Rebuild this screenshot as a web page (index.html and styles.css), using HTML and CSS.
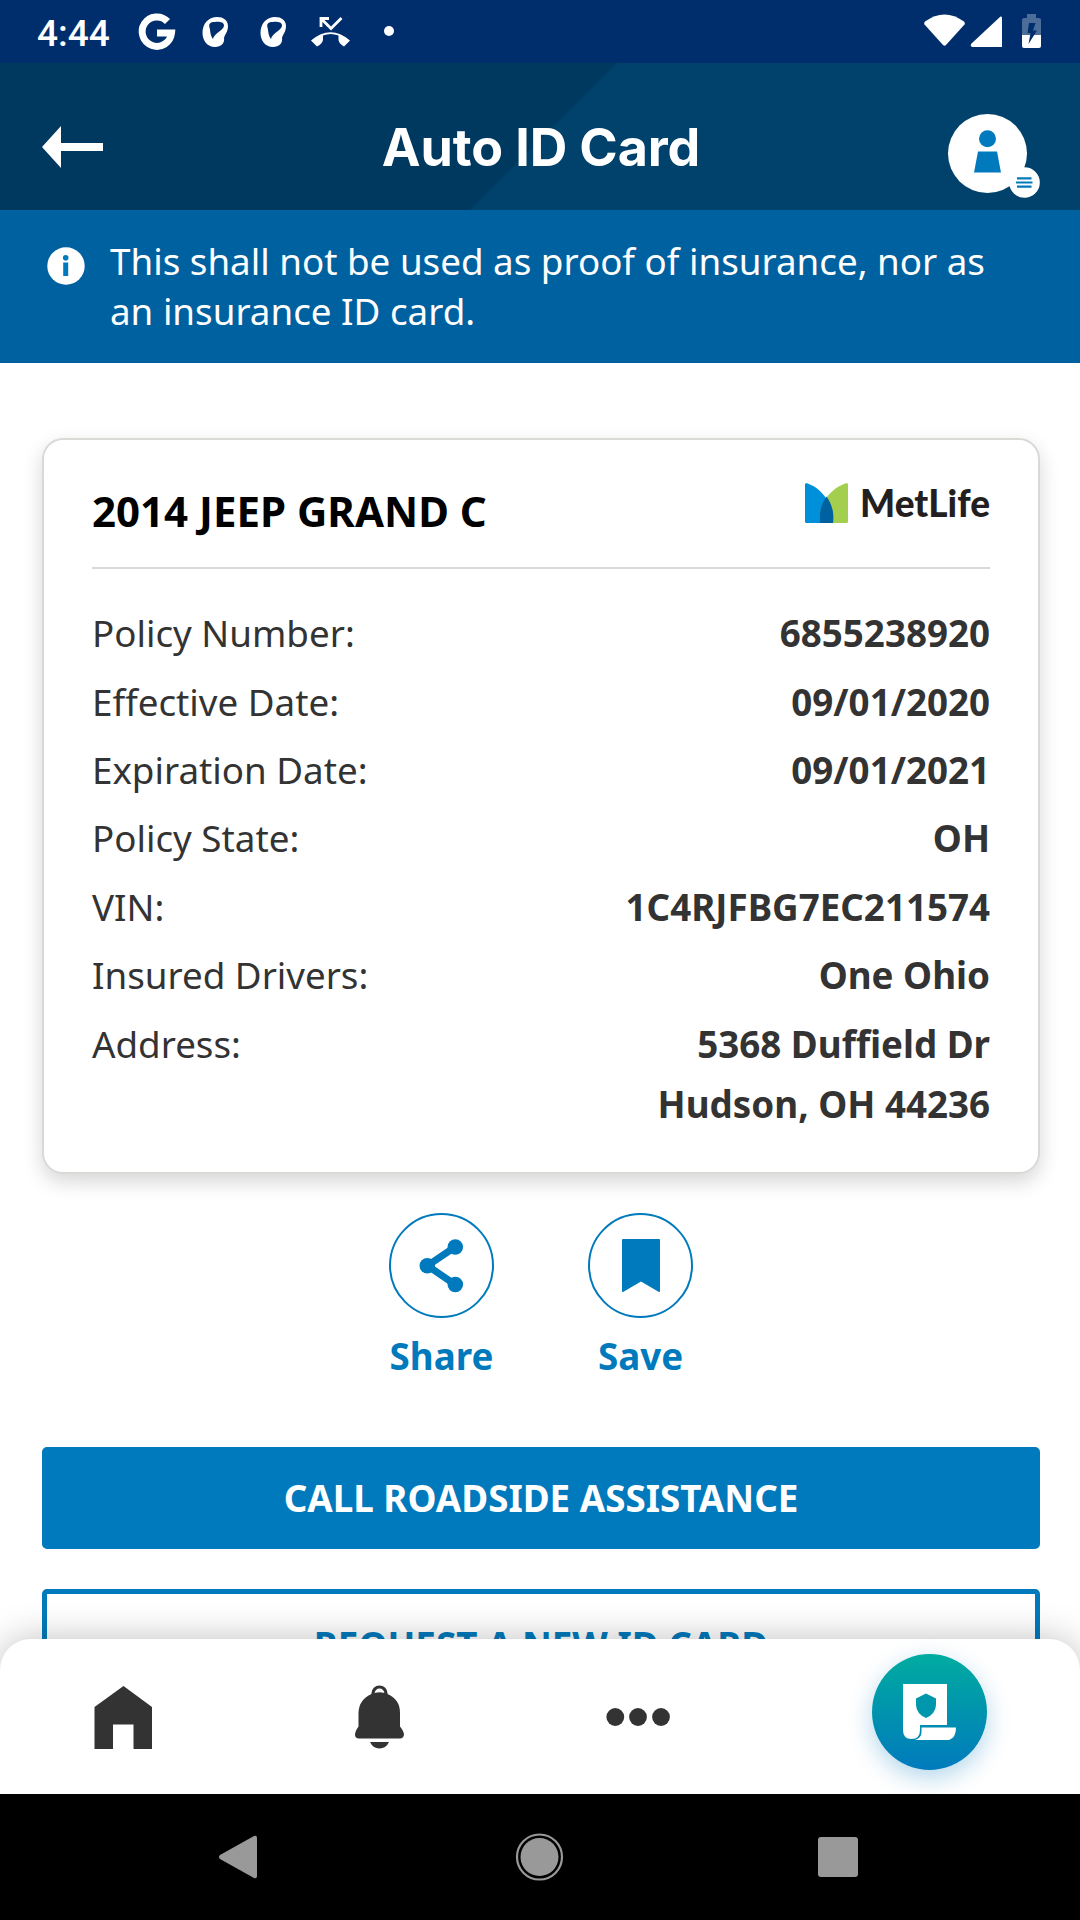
FILE: index.html
```html
<!DOCTYPE html>
<html lang="en">
<head>
<meta charset="utf-8">
<title>Auto ID Card</title>
<link rel="stylesheet" href="styles.css">
</head>
<body>
<div class="screen">
  <div class="status">
    <span class="clock">4:44</span>
    <svg class="notifications" viewBox="130 0 270 63" width="270" height="63">
      <path d="M167.500 21.500A14.700 14.700 0 1 0 171.500 33H157" fill="none" stroke="#fff" stroke-width="7"/>
      <path id="knot" fill="#fff" fill-rule="evenodd" d="M216 17C223 16.500 228 20 228 26C228 32 225 34 224 38C225 43 221 47 215 47C207 47 202.500 40 202.500 33C202.500 24 208 17.500 216 17ZM215 22C210 22 208.500 24 209.500 27.500C210.500 31 210 35 213 39C214 33 223.500 31 224 25.500C224 22 219 21.500 215 22Z"/>
      <use href="#knot" x="58"/>
      <path fill="none" stroke="#fff" stroke-width="2.800" d="M321 27V18.500H329M321.500 19L331 28.500L341.500 18"/>
      <path fill="#fff" d="M311 40.500Q330.500 24 350 40.500L344 46.500Q339 43.500 338.500 40V35.500Q330.500 32.500 323 35.500V40Q322 44 317 46.500Z"/>
      <circle cx="389" cy="31" r="5" fill="#fff"/>
    </svg>
    <svg class="system" viewBox="920 0 130 63" width="130" height="63">
      <path fill="#fff" d="M925 21.500Q944.500 7.500 964 21.500Q965.500 23 964.500 24.500L946 45Q944.500 46.500 943 45L924.500 24.500Q923.500 23 925 21.500Z"/>
      <path fill="#fff" d="M1000.500 16.500Q1002 16 1002 18V47H972Q970 46 971 44Z"/>
      <path fill="#4c6c9a" d="M1022 20Q1022 18 1024 18H1027V14H1036V18H1039Q1041 18 1041 20V35H1022Z"/>
      <path fill="#fff" d="M1022 35H1041V46Q1041 48 1039 48H1024Q1022 48 1022 46Z"/>
      <path fill="#002e6c" d="M1029 23H1035.500L1033 30.500H1037L1028.500 44L1030.500 33H1027.500Z"/>
    </svg>
  </div>

  <header class="header">
    <svg class="back" viewBox="0 0 62 42" width="62" height="42"><path fill="#fff" d="M0 21L19 0V17H61V25H19V42Z"/></svg>
    <h1 class="title">Auto ID Card</h1>
    <svg class="profile" viewBox="0 0 94 86" width="94" height="86">
      <circle cx="39.500" cy="39.500" r="39.500" fill="#fff"/>
      <circle cx="39.500" cy="24.700" r="8.500" fill="#007abc"/>
      <path fill="#007abc" d="M30 37.500H49L53 58.500H26Z"/>
      <circle cx="76.500" cy="68.500" r="15.300" fill="#fff"/>
      <path stroke="#007abc" stroke-width="2.200" d="M69 64.300H83.500M68 68.500H84.500M69 72.700H83.500"/>
    </svg>
  </header>

  <section class="notice">
    <svg class="info" viewBox="0 0 38 38" width="38" height="38">
      <circle cx="19" cy="19" r="18.700" fill="#fff"/>
      <circle cx="18.700" cy="10.700" r="2.800" fill="#007abc"/>
      <path fill="#007abc" d="M16.200 15.500H21.200V29H16.200Z"/>
    </svg>
    <p class="notice-text">This shall not be used as proof of insurance, nor as an insurance ID card.</p>
  </section>

  <main class="content">
    <article class="card">
      <div class="card-head">
        <h2 class="vehicle">2014 JEEP GRAND C</h2>
        <div class="brand">
          <svg viewBox="0 0 43 40" width="43" height="40">
            <path fill="#0090da" d="M0 1.500Q0 0 1.500 0C16 5 27.500 18 28 40H1.500Q0 40 0 38.500Z"/>
            <path fill="#a4ce4e" d="M43 1.500Q43 0 41.500 0C27 5 13.500 18 14.500 40H41.500Q43 40 43 38.500Z"/>
            <path fill="#0061a0" d="M21.500 13.500C26.500 20 29.500 30 28 40H14.500C14 30 16 21 21.500 13.500Z"/>
          </svg>
          <span class="brand-name">MetLife</span>
        </div>
      </div>
      <dl class="details">
        <div class="row"><dt>Policy Number:</dt><dd>6855238920</dd></div>
        <div class="row"><dt>Effective Date:</dt><dd>09/01/2020</dd></div>
        <div class="row"><dt>Expiration Date:</dt><dd>09/01/2021</dd></div>
        <div class="row"><dt>Policy State:</dt><dd>OH</dd></div>
        <div class="row"><dt>VIN:</dt><dd>1C4RJFBG7EC211574</dd></div>
        <div class="row"><dt>Insured Drivers:</dt><dd>One Ohio</dd></div>
        <div class="row"><dt>Address:</dt><dd>5368 Duffield Dr<br>Hudson, OH 44236</dd></div>
      </dl>
    </article>

    <div class="actions">
      <div class="action">
        <svg viewBox="0 0 105 105" width="105" height="105">
          <circle cx="52.500" cy="52.500" r="51.500" fill="none" stroke="#007abc" stroke-width="2"/>
          <path d="M66 34L38.500 52.700M38.500 52.700L66 71.500" stroke="#007abc" stroke-width="7"/>
          <g fill="#007abc"><circle cx="66.300" cy="34" r="7.800"/><circle cx="38.300" cy="52.700" r="7.800"/><circle cx="66.300" cy="71.500" r="7.800"/></g>
        </svg>
        <span>Share</span>
      </div>
      <div class="action">
        <svg viewBox="0 0 105 105" width="105" height="105">
          <circle cx="52.500" cy="52.500" r="51.500" fill="none" stroke="#007abc" stroke-width="2"/>
          <path fill="#007abc" d="M34 27Q34 26 35 26H71Q72 26 72 27V78Q72 79.500 70.500 78.700L53 68.500L35.500 78.700Q34 79.500 34 78Z"/>
        </svg>
        <span>Save</span>
      </div>
    </div>

    <div class="buttons">
      <button class="btn primary">CALL ROADSIDE ASSISTANCE</button>
      <button class="btn outline">REQUEST A NEW ID CARD</button>
    </div>
  </main>

  <nav class="tabs">
    <svg viewBox="94 1685 58 64" width="58" height="64"><path fill="#333" d="M123.500 1686L152 1707V1749H133.500V1724.500H113V1749H94.500V1707Z"/></svg>
    <svg viewBox="354 1684.500 50 65" width="50" height="65">
      <path fill="none" stroke="#333" stroke-width="3.200" d="M373 1695V1694A6.500 6.500 0 0 1 386 1694V1695"/>
      <path fill="#333" d="M371.500 1694.500Q379.500 1691 387.500 1694.500Q400 1700 400 1713V1727Q404 1732 404 1735Q403.500 1739 400 1739H359Q355 1739 355 1735Q355 1732 358.500 1727V1713Q359 1700 371.500 1694.500ZM370 1742.500H389Q386 1749 379.500 1749T370 1742.500Z"/>
    </svg>
    <svg viewBox="606 1708 64 18" width="64" height="18"><g fill="#333"><circle cx="615.300" cy="1717" r="8.900"/><circle cx="638" cy="1717" r="8.900"/><circle cx="661" cy="1717" r="8.900"/></g></svg>
    <div class="fab">
      <svg viewBox="0 0 115 116" width="115" height="116">
        <path fill="#fff" d="M31 30H75V71H48V76Q48 85 39.500 85Q31 85 31 76Z"/>
        <path fill="#fff" d="M49.500 73.500H84Q84 84 77 86H43Q49.500 84 49.500 78Z"/>
        <path fill="#0097ac" d="M54 39.500L64 44.500V51Q63.500 60 54 64Q44.500 60 44 51V44.500Z"/>
      </svg>
    </div>
  </nav>

  <div class="system-nav">
    <svg viewBox="0 0 38 44" width="38" height="44"><path fill="#999" d="M1 20L35 1Q38 0 38 3V41Q38 44 35 43L1 24Q-1 22 1 20Z"/></svg>
    <svg viewBox="-1.500 0 48 48" width="48" height="48"><circle cx="24" cy="24" r="22.500" fill="none" stroke="#999" stroke-width="2.200"/><circle cx="24" cy="24" r="19" fill="#999"/></svg>
    <svg viewBox="0 0 40 40" width="40" height="40"><rect width="40" height="40" rx="3" fill="#999"/></svg>
  </div>
</div>
</body>
</html>
```
FILE: styles.css
```css
* { box-sizing: border-box; margin: 0; padding: 0; }
body { background: #fff; font-family: "Noto Sans", sans-serif; font-size: 36.75px; color: #333; }
svg { display: block; flex: none; overflow: visible; }

.screen { width: 1080px; height: 1920px; display: flex; flex-direction: column; overflow: hidden; }

.status { height: 63px; flex: none; background: #002e6c; display: flex; align-items: center; padding: 0 30px 0 37px; }
.clock { width: 93px; color: #fff; font: 500 37px/63px Roboto, sans-serif; padding-top: 3px; }
.system { margin-left: auto; }

.header { height: 147px; flex: none; display: grid; grid-template-columns: 94px 1fr 94px; align-items: start; padding: 0 38px 0 42px; background: linear-gradient(135deg, #003960 436px, #00426b 437px); }
.back { margin-top: 63px; }
.title { color: #fff; text-align: center; font: 700 52px/64px Inter, sans-serif; letter-spacing: -0.100px; margin: 53px 2px 0 0; }
.profile { margin-top: 51px; }

.notice { height: 153px; flex: none; display: flex; padding: 27px 60px 0 47px; background: #0061a0; color: #fff; }
.info { margin-top: 10px; }
.notice-text { margin: -1px 0 0 25px; line-height: 50px; }

.content { flex: 1; min-height: 0; padding: 75px 40px 0 42px; }
.card { height: 736px; padding: 0 48px; border: 2px solid #d9dad6; border-radius: 21px; background: #fff; box-shadow: 0 8px 20px rgba(0, 0, 0, .16); }
.card-head { height: 129px; display: flex; justify-content: space-between; border-bottom: 2px solid #d9dad6; }
.vehicle { font-size: 42px; font-weight: 700; line-height: 58px; margin-top: 42px; color: #000; }
.brand { display: flex; margin-top: 43px; height: 40px; }
.brand-name { font: 900 37px/40px Lato, sans-serif; color: #231f20; margin-left: 12px; }
.details { padding-top: 34.200px; display: grid; gap: 8.400px; }
.row { display: flex; justify-content: space-between; line-height: 60px; }
.row dd { text-align: right; font-weight: 700; }

.actions { margin-top: 39px; display: flex; justify-content: center; gap: 94px; color: #007abc; font-weight: 700; }
.action { width: 105px; display: flex; flex-direction: column; align-items: center; }
.action span { line-height: 50px; margin-top: 13px; }

.buttons { display: grid; gap: 40px; margin-top: 66px; }
.btn { height: 102px; border: 5px solid #007abc; border-radius: 5px; font: 700 36.750px/50px "Noto Sans", sans-serif; }
.primary { background: #007abc; color: #fff; }
.outline { height: 111px; background: #fff; color: #007abc; }

.tabs { position: relative; height: 155px; flex: none; display: flex; align-items: center; justify-content: space-between; padding: 0 93px 0 94px; background: #fff; border-radius: 31px 31px 0 0; box-shadow: 0 0 36px rgba(0, 0, 0, .25); }
.fab { width: 115px; height: 116px; margin-bottom: 9px; border-radius: 50%; background: linear-gradient(#00aca0, #007abc); box-shadow: 0 8px 24px rgba(0, 122, 188, .3); }

.system-nav { position: relative; height: 126px; flex: none; background: #000; display: flex; align-items: center; justify-content: space-between; padding: 0 222px 0 219px; }
```
